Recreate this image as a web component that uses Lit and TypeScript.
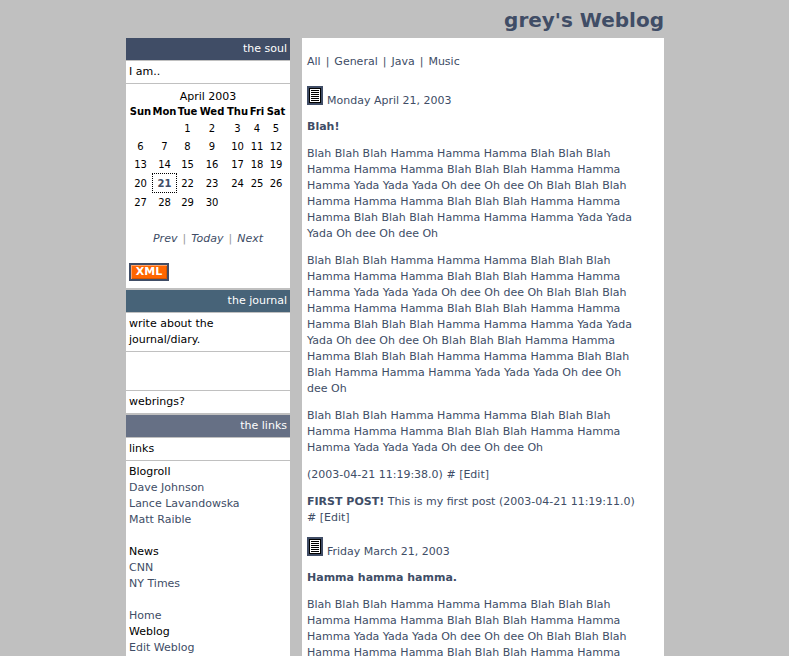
import { LitElement, html, css, svg } from "lit";
import { customElement } from "lit/decorators.js";

const VERSE = "Blah Blah Blah Hamma Hamma Hamma";
const YADA = "Yada Yada Yada Oh dee Oh dee Oh";
const STANZA = `${VERSE} ${VERSE} ${VERSE} ${YADA}`;
const DOUBLE = `${STANZA} ${STANZA}`;
const TRIPLE = `${DOUBLE} ${STANZA}`;

const DAYS = ["Sun", "Mon", "Tue", "Wed", "Thu", "Fri", "Sat"];
const TODAY = 21;
const FIRST_WEEKDAY = 2;
const DAY_COUNT = 30;

@customElement("day-icon")
export class DayIcon extends LitElement {
  static styles = css`
    :host { display: block; width: 16px; height: 19px; flex: none; }
    svg { display: block; }
  `;
  render() {
    return html`<svg width="16" height="19" viewBox="0 0 16 19" shape-rendering="crispEdges" aria-hidden="true">
      <rect width="16" height="19" fill="#404d66"></rect>
      <rect x="2" y="2" width="12" height="15" fill="#000"></rect>
      <rect x="3" y="3" width="10" height="13" fill="#fff"></rect>
      ${[4, 6, 8, 10, 12, 14].map((y) => svg`<rect x="4" y=${y} width="8" height="1" fill="#000"></rect>`)}
    </svg>`;
  }
}

@customElement("month-calendar")
export class MonthCalendar extends LitElement {
  static styles = css`
    :host { display: block; }
    .month { width: 100%; table-layout: fixed; border-collapse: collapse; font-size: 10px; line-height: 16px; text-align: center; }
    .title { font-size: 11px; padding-top: 1px; }
    .month th { height: 14px; padding: 0; line-height: 14px; white-space: nowrap; }
    .month td { padding: 2px 0 0; }
    .month td.today { padding: 0; }
    .today a { display: block; box-sizing: border-box; height: 20px; padding-top: 2px; border: 1px dotted #000; font-weight: bold; color: #404d66; text-decoration: none; }
    .c1 { width: 23px; } .c2 { width: 25px; } .c3 { width: 21px; } .c4 { width: 28px; }
    .c5 { width: 23px; } .c6 { width: 16px; } .c7 { width: 22px; }
    .nav { display: flex; justify-content: center; gap: 5px; margin-top: 20px; color: #999; }
    .nav a { color: #404d66; font-style: italic; text-decoration: none; }
  `;
  render() {
    const weeks = [0, 1, 2, 3, 4].map((w) =>
      DAYS.map((_, d) => w * 7 + d - FIRST_WEEKDAY + 1)
    );
    return html`
      <table class="month">
        <caption class="title">April 2003</caption>
        <colgroup>${DAYS.map((_, i) => html`<col class="c${i + 1}">`)}</colgroup>
        <thead><tr>${DAYS.map((d) => html`<th scope="col">${d}</th>`)}</tr></thead>
        <tbody>
          ${weeks.map((week) => html`<tr>${week.map((n) =>
            n === TODAY
              ? html`<td class="today"><a href="#">${n}</a></td>`
              : html`<td>${n > 0 && n <= DAY_COUNT ? n : ""}</td>`)}</tr>`)}
        </tbody>
      </table>
      <div class="nav"><a href="#">Prev</a><span>|</span><a href="#">Today</a><span>|</span><a href="#">Next</a></div>
    `;
  }
}

@customElement("app-root")
export class AppRoot extends LitElement {
  static styles = css`
    :host {
      display: block; min-height: 100vh; padding-left: 1px; box-sizing: border-box;
      background: #c0c0c0; color: #404d66;
      font: 11px/16px "DejaVu Sans", Verdana, sans-serif;
    }
    * { box-sizing: border-box; }
    a { color: #404d66; text-decoration: none; }
    .page { max-width: 538px; margin: 0 auto; }
    .title { margin: 0; padding: 8px 0 6px; font-size: 20px; line-height: 24px; text-align: right; }
    .columns { display: grid; grid-template-columns: 164px minmax(0, 1fr); gap: 12px; }
    .side { background: #fff; color: #000; }
    .head { margin: 0; padding: 3px; font-size: 11px; font-weight: normal; color: #fff; text-align: right; border-bottom: 1px solid #c0c0c0; }
    .soul { background: #404d66; }
    .journal { background: #476378; }
    .links { background: #667085; }
    .row { padding: 3px; border-bottom: 1px solid #c0c0c0; }
    .last { border-bottom-width: 2px; }
    .empty { height: 39px; }
    .calendar { padding: 4px 3px 7px; }
    .xml { display: block; width: 40px; height: 18px; margin-top: 16px; background: #ff6600; border: 2px solid #404d66; box-shadow: inset 1px 1px #ffa366, inset -1px -1px #d95700; color: #fff; font-weight: bold; line-height: 14px; text-align: center; }
    .list { margin: 0; padding: 0; list-style: none; }
    .list + .list { margin-top: 16px; }
    .groups { padding: 3px; }
    .main { background: #fff; padding: 16px 24px 16px 5px; }
    .main p { margin: 0 0 11px; }
    .cats { display: flex; gap: 5px; padding-bottom: 16px; }
    .day { display: flex; gap: 4px; height: 23px; margin: 0 0 10px; font-size: 11px; font-weight: normal; }
    .date { align-self: flex-end; }
  `;
  render() {
    return html`
      <div class="page">
        <h1 class="title">grey's Weblog</h1>
        <div class="columns">
          <aside class="side">
            <h2 class="head soul">the soul</h2>
            <div class="row">I am..</div>
            <div class="row last calendar">
              <month-calendar></month-calendar>
              <a class="xml" href="#">XML</a>
            </div>
            <h2 class="head journal">the journal</h2>
            <div class="row">write about the journal/diary.</div>
            <div class="row empty"></div>
            <div class="row last">webrings?</div>
            <h2 class="head links">the links</h2>
            <div class="row">links</div>
            <div class="groups">
              <ul class="list">
                <li>Blogroll</li>
                <li><a href="#">Dave Johnson</a></li>
                <li><a href="#">Lance Lavandowska</a></li>
                <li><a href="#">Matt Raible</a></li>
              </ul>
              <ul class="list">
                <li>News</li>
                <li><a href="#">CNN</a></li>
                <li><a href="#">NY Times</a></li>
              </ul>
              <ul class="list">
                <li><a href="#">Home</a></li>
                <li>Weblog</li>
                <li><a href="#">Edit Weblog</a></li>
              </ul>
            </div>
          </aside>
          <main class="main">
            <nav class="cats"><a href="#">All</a><span>|</span><a href="#">General</a><span>|</span><a href="#">Java</a><span>|</span><a href="#">Music</a></nav>
            <h2 class="day"><day-icon></day-icon><span class="date">Monday April 21, 2003</span></h2>
            <p><b>Blah!</b></p>
            <p>${DOUBLE}</p>
            <p>${TRIPLE}</p>
            <p>${STANZA}</p>
            <p>(2003-04-21 11:19:38.0) <a href="#">#</a> <a href="#">[Edit]</a></p>
            <p><b>FIRST POST!</b> This is my first post (2003-04-21 11:19:11.0) <a href="#">#</a> <a href="#">[Edit]</a></p>
            <h2 class="day"><day-icon></day-icon><span class="date">Friday March 21, 2003</span></h2>
            <p><b>Hamma hamma hamma.</b></p>
            <p>${DOUBLE}</p>
          </main>
        </div>
      </div>
    `;
  }
}
